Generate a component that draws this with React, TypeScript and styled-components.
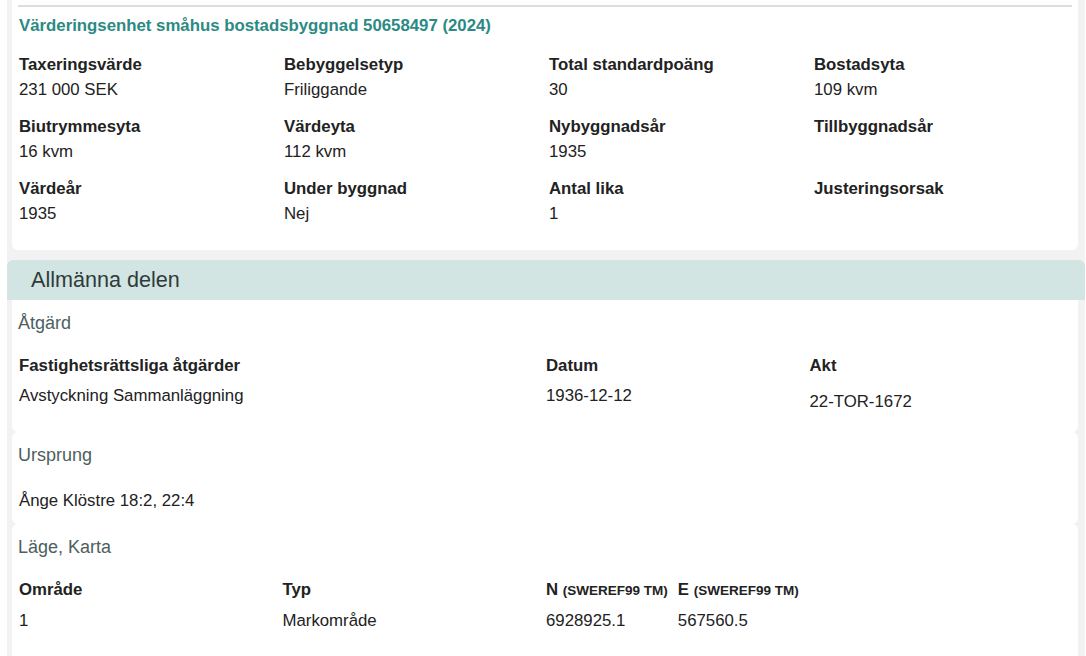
import React from "react";
import styled, { createGlobalStyle } from "styled-components";

const Global = createGlobalStyle`
  html, body { margin: 0; padding: 0; background: #ffffff; }
  body { font-family: "Liberation Sans", Arial, sans-serif; color: #222222; }
  * { box-sizing: border-box; }
`;

const Wrapper = styled.div`
  margin-left: 7px;
  width: 1078px;
  background: #f2f2f2;
  display: flex;
  flex-direction: column;
  padding-bottom: 40px;
`;

const TopCard = styled.section`
  margin: 0 7px 0 5px;
  background: #ffffff;
  border-radius: 0 0 6px 6px;
  padding: 5px 0 24px 7px;
`;

const Rule = styled.hr`
  margin: 0 6px 0 -1px;
  border: 0;
  height: 2px;
  background: #dddddd;
`;

const CardTitle = styled.h2`
  margin: 6px 0 0;
  font-size: 16.8px;
  line-height: 25px;
  font-weight: 700;
  color: #2b8a83;
`;

const FactGrid = styled.div`
  margin-top: 15px;
  display: grid;
  grid-template-columns: repeat(4, 265px);
  row-gap: 13px;
`;

const Fact = styled.div`
  display: flex;
  flex-direction: column;
  font-size: 16.8px;
  line-height: 24.5px;
  min-height: 49px;
`;

const FactLabel = styled.span`
  font-weight: 700;
  color: #222222;
`;

const FactValue = styled.span`
  color: #222222;
`;

const Panel = styled.section`
  margin-top: 10px;
  display: flex;
  flex-direction: column;
`;

const PanelHeader = styled.h1`
  margin: 0;
  height: 40px;
  padding: 0 24px;
  background: #d3e5e2;
  border-radius: 6px 6px 0 0;
  font-size: 21.6px;
  line-height: 39px;
  font-weight: 400;
  color: #2f3b3a;
`;

const PanelBody = styled.div`
  padding: 0 7px 0 5px;
  display: flex;
  flex-direction: column;
`;

const SubCard = styled.div<{ $pb: number; $first?: boolean }>`
  background: #ffffff;
  border-radius: ${(p) => (p.$first ? "0 0 6px 6px" : "6px")};
  padding: 12px 5px ${(p) => p.$pb}px 7px;
`;

const SubHeading = styled.h3`
  margin: 0 0 0 -1px;
  font-size: 18px;
  line-height: 22px;
  font-weight: 400;
  color: #4d605e;
`;

const Table = styled.div<{ $cols: string }>`
  margin-top: 12px;
  display: grid;
  grid-template-columns: ${(p) => p.$cols};
  font-size: 16.8px;
  line-height: 24px;
`;

const Th = styled.div<{ $pr?: number }>`
  padding: 8px ${(p) => p.$pr ?? 0}px 3px 0;
  font-weight: 700;
  color: #222222;
  white-space: nowrap;
`;

const Unit = styled.span`
  font-size: 13.5px;
  font-weight: 700;
`;

const Td = styled.div<{ $pt?: number }>`
  padding: ${(p) => p.$pt ?? 3}px 0 0;
  color: #222222;
`;

const PlainText = styled.p`
  margin: 23px 0 0;
  font-size: 16.8px;
  line-height: 24px;
  color: #222222;
`;

const facts: [string, string][] = [
  ["Taxeringsvärde", "231 000 SEK"],
  ["Bebyggelsetyp", "Friliggande"],
  ["Total standardpoäng", "30"],
  ["Bostadsyta", "109 kvm"],
  ["Biutrymmesyta", "16 kvm"],
  ["Värdeyta", "112 kvm"],
  ["Nybyggnadsår", "1935"],
  ["Tillbyggnadsår", ""],
  ["Värdeår", "1935"],
  ["Under byggnad", "Nej"],
  ["Antal lika", "1"],
  ["Justeringsorsak", ""],
];

export default function App() {
  return (
    <>
      <Global />
      <Wrapper>
        <TopCard>
          <Rule />
          <CardTitle>Värderingsenhet småhus bostadsbyggnad 50658497 (2024)</CardTitle>
          <FactGrid>
            {facts.map(([label, value]) => (
              <Fact key={label}>
                <FactLabel>{label}</FactLabel>
                <FactValue>{value}</FactValue>
              </Fact>
            ))}
          </FactGrid>
        </TopCard>

        <Panel>
          <PanelHeader>Allmänna delen</PanelHeader>
          <PanelBody>
            <SubCard $pb={18} $first>
              <SubHeading>Åtgärd</SubHeading>
              <Table $cols="50% 25% 25%">
                <Th>Fastighetsrättsliga åtgärder</Th>
                <Th>Datum</Th>
                <Th>Akt</Th>
                <Td>Avstyckning Sammanläggning</Td>
                <Td>1936-12-12</Td>
                <Td $pt={9}>22-TOR-1672</Td>
              </Table>
            </SubCard>

            <SubCard $pb={11}>
              <SubHeading>Ursprung</SubHeading>
              <PlainText>Ånge Klöstre 18:2, 22:4</PlainText>
            </SubCard>

            <SubCard $pb={40}>
              <SubHeading>Läge, Karta</SubHeading>
              <Table $cols="25% 25% auto 1fr">
                <Th>Område</Th>
                <Th>Typ</Th>
                <Th $pr={10}>
                  N <Unit>(SWEREF99 TM)</Unit>
                </Th>
                <Th>
                  E <Unit>(SWEREF99 TM)</Unit>
                </Th>
                <Td>1</Td>
                <Td>Markområde</Td>
                <Td>6928925.1</Td>
                <Td>567560.5</Td>
              </Table>
            </SubCard>
          </PanelBody>
        </Panel>
      </Wrapper>
    </>
  );
}
